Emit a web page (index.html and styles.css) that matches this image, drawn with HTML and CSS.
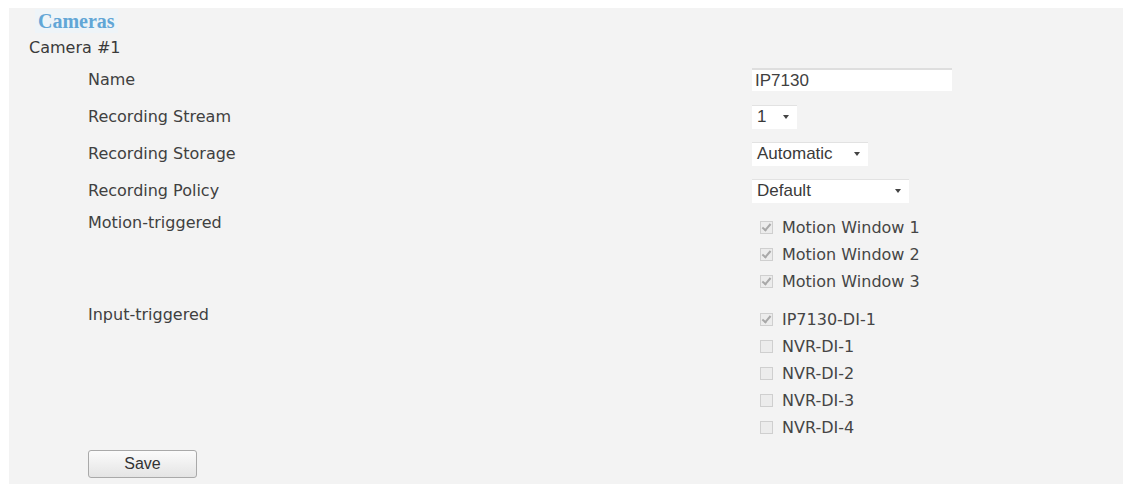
FILE: index.html
```html
<!DOCTYPE html>
<html>
<head>
<meta charset="utf-8">
<link rel="stylesheet" href="styles.css">
</head>
<body>
<div class="panel">
  <div class="title"><span class="title-text">Cameras</span></div>
  <div class="camera">Camera #1</div>
  <div class="form">
    <div class="row">
      <div class="label">Name</div>
      <div class="ctrl"><div class="input">IP7130</div></div>
    </div>
    <div class="row">
      <div class="label">Recording Stream</div>
      <div class="ctrl"><div class="select s-stream"><span>1</span><span class="arrow"></span></div></div>
    </div>
    <div class="row">
      <div class="label">Recording Storage</div>
      <div class="ctrl"><div class="select s-storage"><span>Automatic</span><span class="arrow"></span></div></div>
    </div>
    <div class="row">
      <div class="label">Recording Policy</div>
      <div class="ctrl"><div class="select s-policy"><span>Default</span><span class="arrow"></span></div></div>
    </div>
    <div class="group g-motion">
      <div class="label">Motion-triggered</div>
      <ul class="checks">
        <li><span class="box checked"></span>Motion Window 1</li>
        <li><span class="box checked"></span>Motion Window 2</li>
        <li><span class="box checked"></span>Motion Window 3</li>
      </ul>
    </div>
    <div class="group g-input">
      <div class="label">Input-triggered</div>
      <ul class="checks">
        <li><span class="box checked"></span>IP7130-DI-1</li>
        <li><span class="box"></span>NVR-DI-1</li>
        <li><span class="box"></span>NVR-DI-2</li>
        <li><span class="box"></span>NVR-DI-3</li>
        <li><span class="box"></span>NVR-DI-4</li>
      </ul>
    </div>
  </div>
  <div class="actions"><button class="save">Save</button></div>
</div>
</body>
</html>
```
FILE: styles.css
```css
html, body {
  margin: 0;
  padding: 0;
  background: #ffffff;
}
body {
  width: 1123px;
  height: 484px;
  overflow: hidden;
}
.panel {
  margin: 8px 0 0 9px;
  height: 476px;
  background: #f3f3f3;
  color: #404040;
  font-family: "DejaVu Sans", Verdana, sans-serif;
  font-size: 16px;
}
.title {
  height: 26px;
  display: flex;
  align-items: center;
  padding-left: 26px;
}
.title-text {
  font-family: "Liberation Serif", "Times New Roman", serif;
  font-weight: bold;
  font-size: 20px;
  color: #62a6d6;
  background: #eef4f8;
  padding: 0 3px;
  line-height: 24px;
}
.camera {
  height: 27px;
  line-height: 28px;
  padding-left: 20px;
  color: #3a3a3a;
}
.form {
  padding-left: 79px;
}
.row {
  display: grid;
  grid-template-columns: 664px 1fr;
  height: 37px;
  align-items: center;
}
.label {
  line-height: 20px;
  color: #404040;
}
.input {
  width: 200px;
  height: 23px;
  box-sizing: border-box;
  background: #fff;
  border-top: 2px solid #dedede;
  padding-left: 3px;
  font-family: "Liberation Sans", Arial, sans-serif;
  font-size: 17px;
  line-height: 21px;
  color: #404040;
}
.select {
  display: flex;
  align-items: center;
  justify-content: space-between;
  height: 24px;
  box-sizing: border-box;
  background: #fff;
  border-top: 1px solid #e2e2e2;
  padding: 0 8px 0 5px;
  font-family: "Liberation Sans", Arial, sans-serif;
  font-size: 17px;
  color: #3a3a3a;
}
.s-stream { width: 45px; }
.s-storage { width: 116px; }
.s-policy { width: 157px; }
.arrow {
  width: 0;
  height: 0;
  border-left: 3px solid transparent;
  border-right: 3px solid transparent;
  border-top: 4px solid #444;
}
.group {
  display: grid;
  grid-template-columns: 664px 1fr;
  align-items: start;
}
.g-motion .label { padding-top: 4px; }
.g-motion .checks { padding-top: 5px; }
.g-input .label { padding-top: 10px; }
.g-input .checks { padding-top: 11px; }
.checks {
  list-style: none;
  margin: 0;
  padding: 0 0 0 8px;
}
.checks li {
  display: flex;
  align-items: center;
  height: 27px;
  color: #454545;
}
.box {
  width: 11px;
  height: 11px;
  border: 1px solid #cfcfcf;
  background: #ececec;
  margin-right: 9px;
  position: relative;
  flex: none;
}
.box.checked::after {
  content: "";
  position: absolute;
  left: 3px;
  top: 0px;
  width: 3px;
  height: 7px;
  border-right: 2px solid #a8a8a8;
  border-bottom: 2px solid #a8a8a8;
  transform: rotate(40deg);
}
.actions {
  padding: 9px 0 0 79px;
}
.save {
  width: 109px;
  height: 28px;
  border: 1px solid #a9a9a9;
  border-radius: 3px;
  background: linear-gradient(#fbfbfb, #e4e4e4);
  font-family: "Liberation Sans", Arial, sans-serif;
  font-size: 16px;
  color: #333;
  padding: 0;
}
```
